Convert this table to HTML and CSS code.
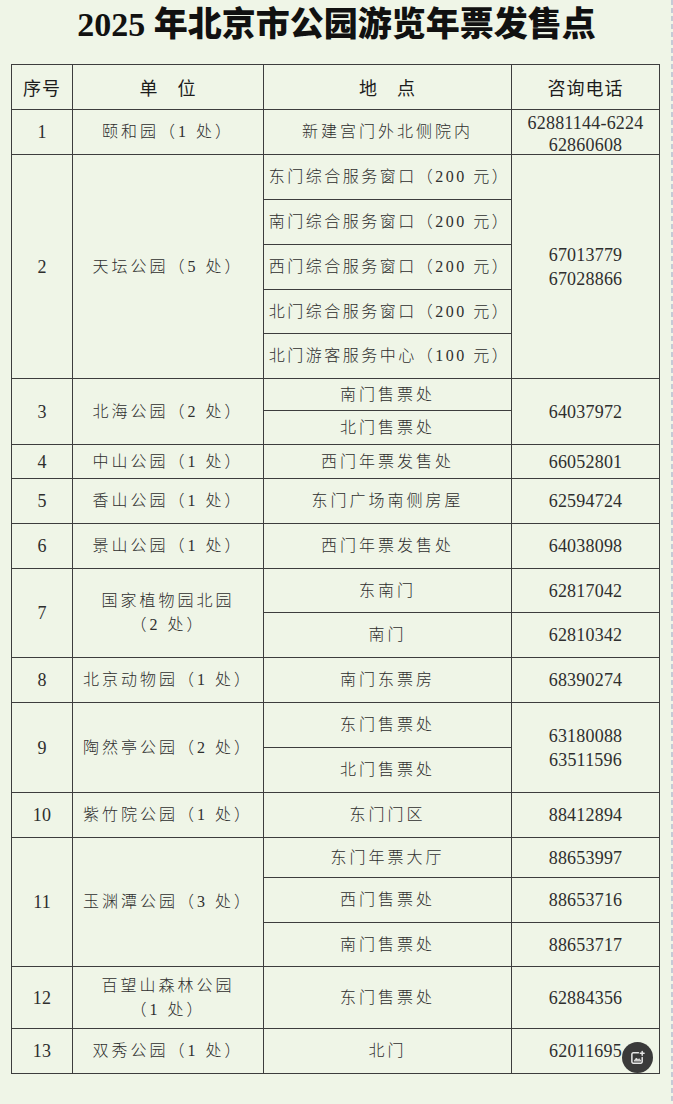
FILE: index.html
```html
<!DOCTYPE html>
<html lang="zh-CN">
<head>
<meta charset="utf-8">
<title>2025年北京市公园游览年票发售点</title>
<link rel="stylesheet" href="styles.css">
</head>
<body>
<div class="page">
  <h1 class="title"><span class="title-num">2025</span> 年北京市公园游览年票发售点</h1>
  <div class="grid">
    <div class="cell head">序号</div>
    <div class="cell head">单　位</div>
    <div class="cell head">地　点</div>
    <div class="cell head">咨询电话</div>

    <div class="cell num">1</div>
    <div class="cell">颐和园（1 处）</div>
    <div class="cell">新建宫门外北侧院内</div>
    <div class="cell tel two low">62881144-6224<br>62860608</div>

    <div class="cell num span5">2</div>
    <div class="cell span5">天坛公园（5 处）</div>
    <div class="cell long">东门综合服务窗口（200 元）</div>
    <div class="cell tel two span5">67013779<br>67028866</div>
    <div class="cell long">南门综合服务窗口（200 元）</div>
    <div class="cell long">西门综合服务窗口（200 元）</div>
    <div class="cell long">北门综合服务窗口（200 元）</div>
    <div class="cell long">北门游客服务中心（100 元）</div>

    <div class="cell num span2">3</div>
    <div class="cell span2">北海公园（2 处）</div>
    <div class="cell">南门售票处</div>
    <div class="cell tel span2">64037972</div>
    <div class="cell">北门售票处</div>

    <div class="cell num">4</div>
    <div class="cell">中山公园（1 处）</div>
    <div class="cell">西门年票发售处</div>
    <div class="cell tel">66052801</div>

    <div class="cell num">5</div>
    <div class="cell">香山公园（1 处）</div>
    <div class="cell">东门广场南侧房屋</div>
    <div class="cell tel">62594724</div>

    <div class="cell num">6</div>
    <div class="cell">景山公园（1 处）</div>
    <div class="cell">西门年票发售处</div>
    <div class="cell tel">64038098</div>

    <div class="cell num span2">7</div>
    <div class="cell two span2">国家植物园北园<br>（2 处）</div>
    <div class="cell">东南门</div>
    <div class="cell tel">62817042</div>
    <div class="cell">南门</div>
    <div class="cell tel">62810342</div>

    <div class="cell num">8</div>
    <div class="cell">北京动物园（1 处）</div>
    <div class="cell">南门东票房</div>
    <div class="cell tel">68390274</div>

    <div class="cell num span2">9</div>
    <div class="cell span2">陶然亭公园（2 处）</div>
    <div class="cell">东门售票处</div>
    <div class="cell tel two span2">63180088<br>63511596</div>
    <div class="cell">北门售票处</div>

    <div class="cell num">10</div>
    <div class="cell">紫竹院公园（1 处）</div>
    <div class="cell">东门门区</div>
    <div class="cell tel">88412894</div>

    <div class="cell num span3">11</div>
    <div class="cell span3">玉渊潭公园（3 处）</div>
    <div class="cell">东门年票大厅</div>
    <div class="cell tel">88653997</div>
    <div class="cell">西门售票处</div>
    <div class="cell tel">88653716</div>
    <div class="cell">南门售票处</div>
    <div class="cell tel">88653717</div>

    <div class="cell num">12</div>
    <div class="cell two">百望山森林公园<br>（1 处）</div>
    <div class="cell">东门售票处</div>
    <div class="cell tel">62884356</div>

    <div class="cell num">13</div>
    <div class="cell">双秀公园（1 处）</div>
    <div class="cell">北门</div>
    <div class="cell tel">62011695</div>
  </div>
  <div class="fab" aria-label="添加图片">
    <svg viewBox="0 0 16 16" width="15" height="15" fill="none" stroke="#e6e6e6" stroke-width="1.6" stroke-linecap="round" stroke-linejoin="round">
      <path d="M9 3H3.5A1.5 1.5 0 0 0 2 4.5v8A1.5 1.5 0 0 0 3.5 14h8a1.5 1.5 0 0 0 1.5-1.5V8"/>
      <path d="M4.5 11.5l2.3-3 1.7 2 1.2-1.3 1.8 2.3z" fill="#e6e6e6" stroke-width="0.8"/>
      <path d="M13 1.5v4M11 3.5h4"/>
    </svg>
  </div>
</div>
</body>
</html>
```
FILE: styles.css
```css
html {
  background-color: #eff5e7;
  background-image: repeating-linear-gradient(to bottom, #c4cbd6 0, #c4cbd6 5px, transparent 5px, transparent 8px);
  background-repeat: no-repeat;
  background-position: right 0 top 0;
  background-size: 2px 100%;
  min-height: 100%;
}
body {
  margin: 0;
  font-family: "Liberation Serif", "Noto Sans CJK SC", serif;
  color: #2e2e2e;
}
.page {
  position: relative;
  width: 673px;
  min-height: 1104px;
}
.title {
  margin: 0;
  height: 50px;
  line-height: 50px;
  text-align: center;
  font-family: "Liberation Serif", "Noto Sans CJK SC", serif;
  font-weight: 900;
  font-size: 34px;
  color: #111;
  letter-spacing: 0;
}
.title-num {
  font-weight: 700;
}
.grid {
  margin: 14px 0 0 11px;
  display: grid;
  width: max-content;
  grid-template-columns: 61px 191px 248px 148px;
  grid-template-rows: 45px 45px 45px 45px 45px 44px 45px 32px 34px 34px 45px 45px 44px 45px 45px 45px 45px 45px 40px 45px 44px 62px 45px;
  border-top: 1px solid #3d3d3d;
  border-left: 1px solid #3d3d3d;
}
.cell {
  box-sizing: border-box;
  border-right: 1px solid #3d3d3d;
  border-bottom: 1px solid #3d3d3d;
  display: flex;
  align-items: center;
  justify-content: center;
  text-align: center;
  font-size: 16px;
  font-weight: 300;
  letter-spacing: 3px;
  white-space: nowrap;
  line-height: 24px;
}
.long {
  letter-spacing: 2.5px;
  padding-left: 4px;
}
.head {
  font-family: "Noto Sans CJK SC", sans-serif;
  font-size: 18px;
  font-weight: 400;
  letter-spacing: 1px;
  color: #1c1c1c;
}
.num,
.tel {
  font-size: 18px;
  letter-spacing: 0.2px;
}
.two {
  line-height: 24px;
}
.low {
  line-height: 22px;
  padding-top: 4px;
}
.span2 { grid-row: span 2; }
.span3 { grid-row: span 3; }
.span5 { grid-row: span 5; }
.fab {
  position: absolute;
  left: 622px;
  top: 1042px;
  width: 31px;
  height: 31px;
  border-radius: 50%;
  background: #3a3a3a;
  display: flex;
  align-items: center;
  justify-content: center;
}
```
